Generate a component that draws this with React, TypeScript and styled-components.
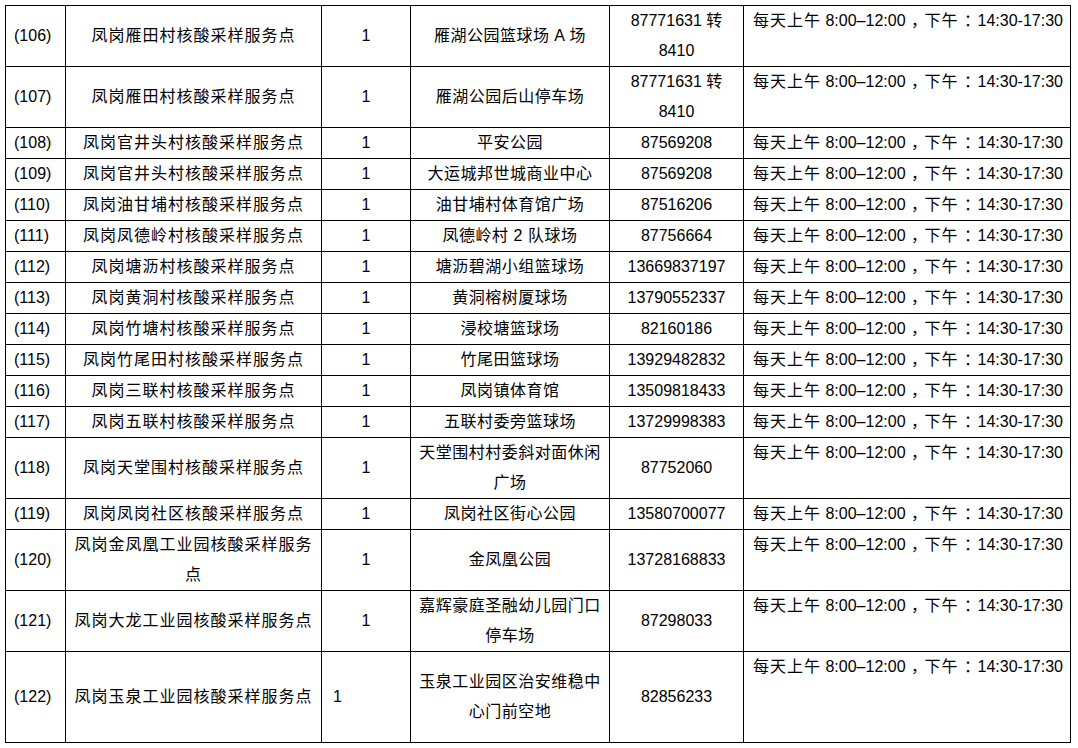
import React from "react";
import styled, { createGlobalStyle } from "styled-components";

const GlobalStyle = createGlobalStyle`
  html, body {
    margin: 0;
    padding: 0;
    background: #ffffff;
  }
  body {
    font-family: "Liberation Sans", "Noto Sans CJK SC", sans-serif;
    color: #000000;
  }
`;

const Page = styled.div`
  padding: 5px 0 0 5px;
`;

const Table = styled.table`
  border-collapse: collapse;
  table-layout: fixed;
  width: 1066px;
  font-size: 16px;
  line-height: 30px;
`;

const Col = styled.col<{ $w: number }>`
  width: ${(p) => p.$w}px;
`;

const Row = styled.tr<{ $tall?: boolean }>`
  & > td {
    height: ${(p) => (p.$tall ? "90px" : "30px")};
  }
`;

const Cell = styled.td`
  border: 1px solid #000000;
  padding: 0;
  vertical-align: middle;
  white-space: normal;
`;

const IndexCell = styled(Cell)`
  text-align: left;
  padding-left: 8px;
`;

const NameCell = styled(Cell)`
  text-align: center;
  padding: 0 5px;
  letter-spacing: 1px;
`;

const CountCell = styled(Cell)<{ $left?: boolean }>`
  text-align: ${(p) => (p.$left ? "left" : "center")};
  padding-left: ${(p) => (p.$left ? "11px" : "0")};
`;

const PlaceCell = styled(Cell)`
  text-align: center;
  padding: 0 7px;
  letter-spacing: 0.5px;
`;

const PhoneCell = styled(Cell)`
  text-align: center;
  padding: 0 8px;
`;

const TimeCell = styled(Cell)`
  text-align: left;
  vertical-align: top;
  padding: 0 0 0 9px;
  white-space: nowrap;
`;

const Cjk = styled.span`
  letter-spacing: 1px;
`;

const Punct = styled.span`
  display: inline-block;
  width: 19px;
  text-align: center;
  line-height: 16px;
  font-feature-settings: "halt" 1;
`;

const TimeText = () => (
  <>
    <Cjk>每天上午</Cjk> 8:00–12:00<Punct>，</Punct>
    <Cjk>下午</Cjk>
    <Punct>：</Punct>14:30-17:30
  </>
);

type Site = {
  idx: number;
  name: string;
  place: string;
  phone: string;
  leftCount?: boolean;
  tall?: boolean;
};

const sites: Site[] = [
  { idx: 106, name: "凤岗雁田村核酸采样服务点", place: "雁湖公园篮球场 A 场", phone: "87771631 转 8410" },
  { idx: 107, name: "凤岗雁田村核酸采样服务点", place: "雁湖公园后山停车场", phone: "87771631 转 8410" },
  { idx: 108, name: "凤岗官井头村核酸采样服务点", place: "平安公园", phone: "87569208" },
  { idx: 109, name: "凤岗官井头村核酸采样服务点", place: "大运城邦世城商业中心", phone: "87569208" },
  { idx: 110, name: "凤岗油甘埔村核酸采样服务点", place: "油甘埔村体育馆广场", phone: "87516206" },
  { idx: 111, name: "凤岗凤德岭村核酸采样服务点", place: "凤德岭村 2 队球场", phone: "87756664" },
  { idx: 112, name: "凤岗塘沥村核酸采样服务点", place: "塘沥碧湖小组篮球场", phone: "13669837197" },
  { idx: 113, name: "凤岗黄洞村核酸采样服务点", place: "黄洞榕树厦球场", phone: "13790552337" },
  { idx: 114, name: "凤岗竹塘村核酸采样服务点", place: "浸校塘篮球场", phone: "82160186" },
  { idx: 115, name: "凤岗竹尾田村核酸采样服务点", place: "竹尾田篮球场", phone: "13929482832" },
  { idx: 116, name: "凤岗三联村核酸采样服务点", place: "凤岗镇体育馆", phone: "13509818433" },
  { idx: 117, name: "凤岗五联村核酸采样服务点", place: "五联村委旁篮球场", phone: "13729998383" },
  { idx: 118, name: "凤岗天堂围村核酸采样服务点", place: "天堂围村村委斜对面休闲广场", phone: "87752060" },
  { idx: 119, name: "凤岗凤岗社区核酸采样服务点", place: "凤岗社区街心公园", phone: "13580700077" },
  { idx: 120, name: "凤岗金凤凰工业园核酸采样服务点", place: "金凤凰公园", phone: "13728168833" },
  { idx: 121, name: "凤岗大龙工业园核酸采样服务点", place: "嘉辉豪庭圣融幼儿园门口停车场", phone: "87298033" },
  {
    idx: 122,
    name: "凤岗玉泉工业园核酸采样服务点",
    place: "玉泉工业园区治安维稳中心门前空地",
    phone: "82856233",
    leftCount: true,
    tall: true,
  },
];

export default function App() {
  return (
    <>
      <GlobalStyle />
      <Page>
        <Table>
          <colgroup>
            <Col $w={60} />
            <Col $w={256} />
            <Col $w={89} />
            <Col $w={199} />
            <Col $w={134} />
            <Col $w={327} />
          </colgroup>
          <tbody>
            {sites.map((s) => (
              <Row key={s.idx} $tall={s.tall}>
                <IndexCell>({s.idx})</IndexCell>
                <NameCell>{s.name}</NameCell>
                <CountCell $left={s.leftCount}>1</CountCell>
                <PlaceCell>{s.place}</PlaceCell>
                <PhoneCell>{s.phone}</PhoneCell>
                <TimeCell>
                  <TimeText />
                </TimeCell>
              </Row>
            ))}
          </tbody>
        </Table>
      </Page>
    </>
  );
}
